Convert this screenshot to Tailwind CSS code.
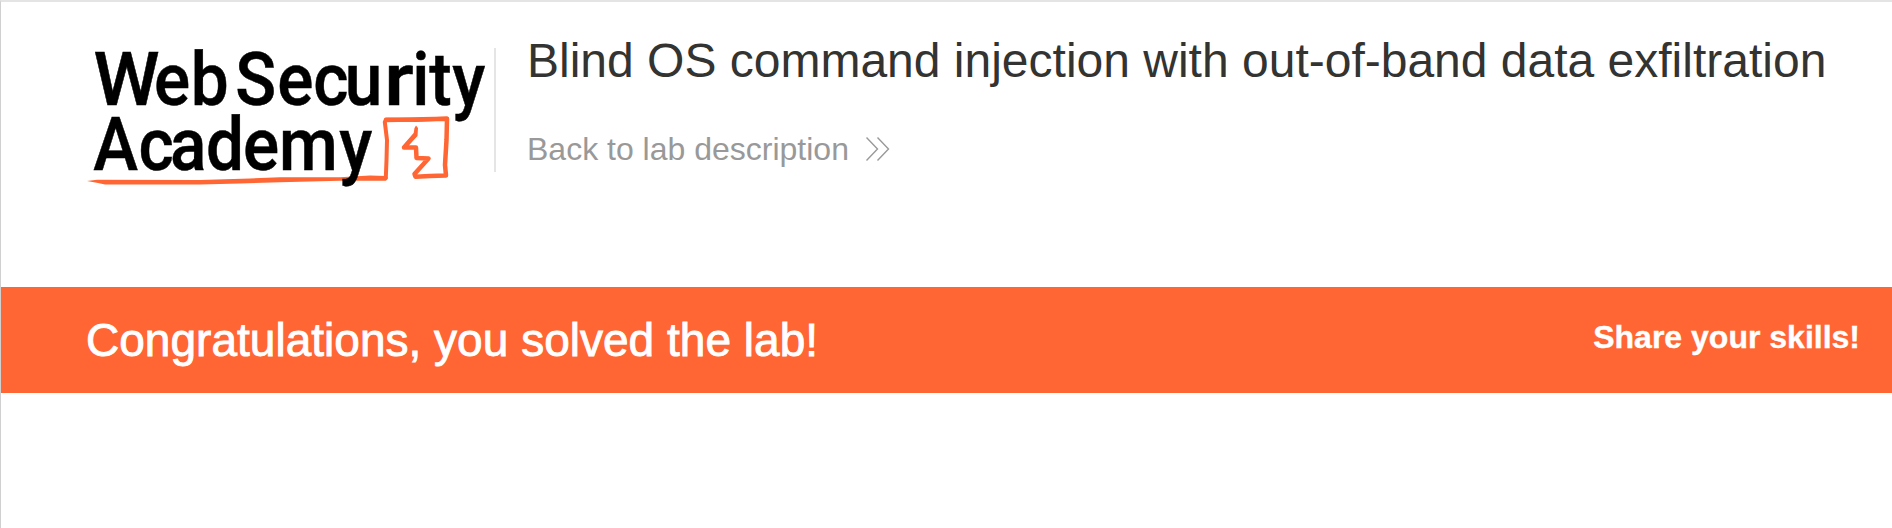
<!DOCTYPE html>
<html lang="en">
<head>
<meta charset="utf-8">
<title>Blind OS command injection with out-of-band data exfiltration</title>
<script src="https://cdn.jsdelivr.net/npm/@tailwindcss/browser@4"></script>
</head>
<body class="h-[528px] overflow-hidden border-t-2 border-l border-t-[#e4e4e4] border-l-[#d0d0d0] bg-white font-['Liberation_Sans',Arial,sans-serif]">
<header class="flex h-[285px] pl-[85px] pt-[30px]">
  <svg class="h-[160px] w-[408px] shrink-0" viewBox="86 32 408 160" role="img" aria-label="Web Security Academy">
    <path d="M87 181L97 179.800L200 180L250 178.500L280 177.300L340 177.300L370 175.500L386 176L388 178L386 180.800L340 180.800L280 182.300L240 183.500L200 184.500L105 184.500L98 183Z" fill="#ff6633"/>
    <path d="M385.800 178L386.500 160L387 140L384.800 122L386 119.500L416 120L447 118.500" fill="none" stroke="#ff6633" stroke-width="4" stroke-linejoin="round" stroke-linecap="round"/>
    <path d="M386 120L447 118.800L446.500 140L445 165L446 175.500L430 176L415.500 176.800L414.500 174L428.500 158.500L416.500 158L416 147.500L404 147.500L414.500 135.500" fill="none" stroke="#ff6633" stroke-width="4.500" stroke-linejoin="round" stroke-linecap="round"/>
    <path d="M416 125.500L418 128L417.500 136L406 148L402 147L413.500 134L414.500 128Z" fill="#ff6633"/>
    <g font-family="Roboto, sans-serif" font-weight="500" font-size="75" fill="#000" stroke="#000" stroke-width=".5">
      <text y="105.300" x="93.500">W</text>
      <g transform="scale(.9 1)">
        <text y="105.300" x="171 212 250 261.500 308 348 383">eb Secu</text>
        <text y="105.300" x="458 477 502.500">ity</text>
        <text y="170.300" x="103.500 154 189 229 270 310 377">Academy</text>
      </g>
      <text y="105.300" x="341.500" transform="translate(384 0) scale(1.120 1) translate(-341.500 0)">r</text>
    </g>
  </svg>
  <div class="mt-[16px] h-[124px] w-0.5 shrink-0 bg-[#e5e5e5]"></div>
  <div class="ml-[31px] whitespace-nowrap pt-px">
    <h2 class="text-[48px] leading-[56px] text-[#333332]">Blind OS command injection with out-of-band data exfiltration</h2>
    <a class="mt-[42px] flex items-center text-[32px] leading-[36px] text-[#999]">Back to lab description
      <svg class="ml-[17px] h-6 w-6" viewBox="0 0 24 24" fill="none" stroke="#999" stroke-width="1.400"><path d="M.5 .5L11.500 12L.5 23.500M11.500 .5L22.500 12L11.500 23.500"/></svg>
    </a>
  </div>
</header>
<section class="flex h-[106px] items-center justify-between bg-[#ff6633] pr-[32px] pl-[85px] text-white">
  <h4 class="text-[46px] leading-[52px] tracking-[0.02px] [-webkit-text-stroke:0.9px_white]">Congratulations, you solved the lab!</h4>
  <span class="mb-1.5 text-[32px] leading-[36px] font-bold [-webkit-text-stroke:0.4px_white]">Share your skills!</span>
</section>
</body>
</html>
